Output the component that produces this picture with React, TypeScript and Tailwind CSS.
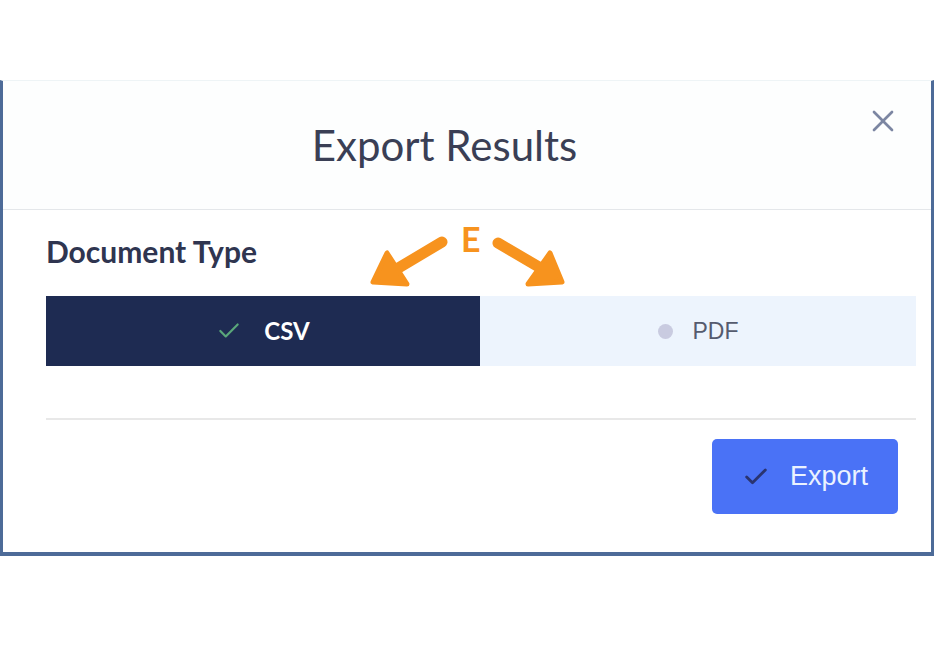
import { X, Check } from "lucide-react";

const App = () => {
  return (
    <div className="relative w-[936px] h-[667px] bg-white" style={{ fontFamily: "Lato, 'Liberation Sans', sans-serif" }}>
      <div className="absolute left-0 top-[80px] w-[934px] h-[476px] bg-white border-x-[3px] border-b-[4px] border-t border-x-[#4d6b98] border-b-[#4d6b98] border-t-[#eef4f6] flex flex-col">
        {/* header */}
        <div className="relative h-[129px] flex items-center justify-center pr-[45px] border-b border-[#e4e7ea] bg-[#fdfefe]">
          <h1 className="text-[42px] leading-[50px] text-[#3a3f55]">Export Results</h1>
          <button className="absolute right-[30px] top-[22px] text-[#7c86a2]">
            <X size={36} strokeWidth={1.8} />
          </button>
        </div>

        {/* body */}
        <div className="pl-[43px] pr-[14px] pt-[23px]">
          <h2 className="text-[30px] leading-[36px] font-bold text-[#2f3550]">Document Type</h2>
          <div className="mt-[27px] grid grid-cols-[434px_436px] h-[70px]">
            <div className="bg-[#1e2b52] flex items-center justify-center gap-[22px]">
              <Check size={26} strokeWidth={2} className="text-[#5aa77a]" />
              <span className="text-[24px] font-bold text-white">CSV</span>
            </div>
            <div className="bg-[#edf4fd] flex items-center justify-center gap-[20px]">
              <span className="w-[15px] h-[15px] rounded-full bg-[#c9cbe0]" />
              <span className="text-[23px] text-[#555b6e]" style={{ fontFamily: "'Liberation Sans', Arial, sans-serif" }}>PDF</span>
            </div>
          </div>
          <div className="mt-[52px] w-[870px] h-[2px] bg-[#e8e8e8]" />
          <div className="w-[870px] flex justify-end pr-[18px] pt-[19px]">
            <button className="w-[186px] h-[75px] rounded-[5px] bg-[#4a72f6] flex items-center justify-center gap-[20px]">
              <Check size={28} strokeWidth={2.4} className="text-[#2a3470]" />
              <span className="text-[27px] text-[#eaf2ff]" style={{ fontFamily: "'Liberation Sans', Arial, sans-serif" }}>Export</span>
            </button>
          </div>
        </div>
      </div>

      {/* annotation */}
      <svg className="absolute left-[360px] top-[220px]" width="220" height="80" viewBox="0 0 220 80">
        <g fill="#f7931e" stroke="#f7931e" strokeLinejoin="round" strokeLinecap="round">
          <line x1="82" y1="22" x2="35" y2="50" strokeWidth="11" />
          <polygon points="27,33 13,62 47,64" strokeWidth="5" />
          <line x1="138" y1="23" x2="184" y2="50" strokeWidth="11" />
          <polygon points="190,33 202,62 168,64" strokeWidth="5" />
        </g>
      </svg>
      <span className="absolute left-[461px] top-[222px] text-[34px] leading-[34px] font-bold text-[#f7931e]">E</span>
    </div>
  );
};

export default App;
